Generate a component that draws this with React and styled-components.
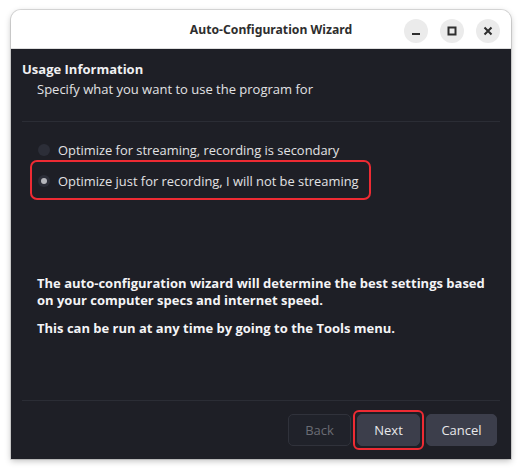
import styled, { createGlobalStyle } from "styled-components";

const GlobalStyle = createGlobalStyle`
  html, body {
    margin: 0;
    padding: 0;
    background: #ffffff;
  }
  body {
    font-family: "Open Sans", "Noto Sans", sans-serif;
  }
`;

const Page = styled.div`
  width: 522px;
  height: 469px;
  padding: 10px 11px 10px 11px;
  box-sizing: border-box;
`;

const Window = styled.div`
  width: 500px;
  height: 449px;
  display: flex;
  flex-direction: column;
  border-radius: 10px 10px 0 0;
  overflow: hidden;
  box-shadow: 0 0 0 1px rgba(0, 0, 0, 0.12), 0 2px 6px rgba(0, 0, 0, 0.25);
`;

const TitleBar = styled.div`
  height: 38px;
  flex-shrink: 0;
  background: #ffffff;
  border-bottom: 1px solid #dedede;
  position: relative;
  display: flex;
  align-items: center;
  justify-content: center;
`;

const Title = styled.div`
  font-family: "Noto Sans", sans-serif;
  font-weight: 700;
  font-size: 12.2px;
  color: #2e2e2e;
  padding-left: 20px;
`;

const Controls = styled.div`
  position: absolute;
  right: 11px;
  top: 9px;
  display: flex;
  gap: 12px;
`;

const CtlButton = styled.div`
  width: 24px;
  height: 24px;
  border-radius: 50%;
  background: #ebebeb;
  display: flex;
  align-items: center;
  justify-content: center;
`;

const Body = styled.div`
  flex: 1;
  background: #1e1f26;
  display: flex;
  flex-direction: column;
  padding: 11px 11px 13px 11px;
  color: #e2e2e4;
  font-size: 13px;
`;

const Heading = styled.div`
  font-weight: 700;
  line-height: 18px;
  color: #f0f0f2;
`;

const SubHeading = styled.div`
  padding-left: 15px;
  line-height: 18px;
  margin-top: 2px;
`;

const Separator = styled.div`
  height: 1px;
  background: #2b2d35;
  margin: ${(p) => p.$margin || "0"};
`;

const Options = styled.div`
  display: flex;
  flex-direction: column;
  margin-top: 12px;
`;

const Option = styled.div`
  position: relative;
  display: flex;
  align-items: center;
  gap: 8px;
  align-self: flex-start;
  height: 31px;
  padding: 0 12px 0 8px;
  margin-left: 8px;
  font-size: 12.9px;
  white-space: nowrap;

  &::before {
    content: "";
    display: ${(p) => (p.$highlight ? "block" : "none")};
    position: absolute;
    left: 0;
    right: 0;
    top: -5px;
    bottom: -4px;
    border: 2px solid #ee2b33;
    border-radius: 7px;
  }
`;

const Radio = styled.span`
  width: 12px;
  height: 12px;
  border-radius: 50%;
  background: #2c2e38;
  display: flex;
  align-items: center;
  justify-content: center;

  &::after {
    content: "";
    width: 6px;
    height: 6px;
    border-radius: 50%;
    background: ${(p) => (p.$checked ? "#b5b6bb" : "transparent")};
  }
`;

const Info = styled.div`
  margin-top: 79px;
  padding-left: 15px;
  font-weight: 700;
  line-height: 17px;
  color: #f4f4f6;

  p {
    margin: 0 0 11px 0;
  }
`;

const Spacer = styled.div`
  flex: 1;
`;

const Footer = styled.div`
  display: flex;
  justify-content: flex-end;
  gap: 6px;
  padding-top: 13px;
  padding-right: 3px;
`;

const Outline = styled.div`
  border: 2px solid ${(p) => (p.$highlight ? "#ee2b33" : "transparent")};
  border-radius: 6px;
  padding: 2px;
  margin: -4px;
`;

const Button = styled.button`
  font-family: "Open Sans", "Noto Sans", sans-serif;
  font-size: 13px;
  height: 32px;
  min-width: ${(p) => p.$width || "63px"};
  border-radius: 5px;
  border: 1px solid ${(p) => (p.disabled ? "#30323b" : "#3c3e4b")};
  background: ${(p) => (p.disabled ? "#20222a" : "#3c3e4b")};
  color: ${(p) => (p.disabled ? "#6a6c74" : "#e8e8ea")};
  padding: 0 12px;
`;

const MinIcon = () => (
  <svg width="10" height="10" viewBox="0 0 10 10">
    <rect x="1" y="7" width="8" height="2" fill="#2e2e2e" />
  </svg>
);

const MaxIcon = () => (
  <svg width="10" height="10" viewBox="0 0 10 10">
    <rect x="1.5" y="1.5" width="7" height="7" fill="none" stroke="#2e2e2e" strokeWidth="2" />
  </svg>
);

const CloseIcon = () => (
  <svg width="10" height="10" viewBox="0 0 10 10">
    <path d="M1.5 1.5 L8.5 8.5 M8.5 1.5 L1.5 8.5" stroke="#2e2e2e" strokeWidth="2" />
  </svg>
);

export default function App() {
  return (
    <Page>
      <GlobalStyle />
      <Window>
        <TitleBar>
          <Title>Auto-Configuration Wizard</Title>
          <Controls>
            <CtlButton><MinIcon /></CtlButton>
            <CtlButton><MaxIcon /></CtlButton>
            <CtlButton><CloseIcon /></CtlButton>
          </Controls>
        </TitleBar>
        <Body>
          <Heading>Usage Information</Heading>
          <SubHeading>Specify what you want to use the program for</SubHeading>
          <Separator $margin="23px 0 0 0" />
          <Options>
            <Option>
              <Radio />
              Optimize for streaming, recording is secondary
            </Option>
            <Option $highlight>
              <Radio $checked />
              Optimize just for recording, I will not be streaming
            </Option>
          </Options>
          <Info>
            <p>
              The auto-configuration wizard will determine the best settings based
              on your computer specs and internet speed.
            </p>
            <p>This can be run at any time by going to the Tools menu.</p>
          </Info>
          <Spacer />
          <Separator />
          <Footer>
            <Button disabled>Back</Button>
            <Outline $highlight>
              <Button>Next</Button>
            </Outline>
            <Outline>
              <Button $width="71px">Cancel</Button>
            </Outline>
          </Footer>
        </Body>
      </Window>
    </Page>
  );
}
